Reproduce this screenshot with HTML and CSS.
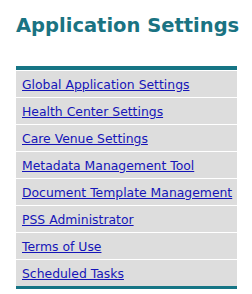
FILE: index.html
```html
<!DOCTYPE html>
<html lang="en">
<head>
    <meta charset="UTF-8">
    <meta name="viewport" content="width=device-width, initial-scale=1.0">
    <title>Application Settings</title>
    <link rel="stylesheet" href="styles.css">
</head>
<body>

    <h1 class="page-title">Application Settings</h1>

    <!-- Settings menu -->
    <ul class="settings-menu">
        <li><a href="#">Global Application Settings</a></li>
        <li><a href="#">Health Center Settings</a></li>
        <li><a href="#">Care Venue Settings</a></li>
        <li><a href="#">Metadata Management Tool</a></li>
        <li><a href="#">Document Template Management</a></li>
        <li><a href="#">PSS Administrator</a></li>
        <li><a href="#">Terms of Use</a></li>
        <li><a href="#">Scheduled Tasks</a></li>
    </ul>

</body>
</html>
```

FILE: styles.css
```css
body {
    margin: 0;
    padding: 0 0 0 16px;
    background-color: #ffffff;
    font-family: "DejaVu Sans", Verdana, sans-serif;
    font-size: 12.4px;
}
.page-title {
    margin: 0;
    padding-top: 14px;
    height: 66px;
    box-sizing: border-box;
    font-size: 19.5px;
    line-height: 24px;
    font-weight: bold;
    color: #1a7382;
    white-space: nowrap;
}
.settings-menu {
    list-style: none;
    margin: 0;
    padding: 0;
    width: 221px;
    border-top: 4px solid #167585;
    border-bottom: 3px solid #167585;
}
.settings-menu li {
    background-color: #dddddd;
    border-top: 1px solid #ffffff;
    height: 25px;
    line-height: 25px;
    padding: 1px 0 0 6px;
}
.settings-menu a {
    color: #1515b8;
}
```
